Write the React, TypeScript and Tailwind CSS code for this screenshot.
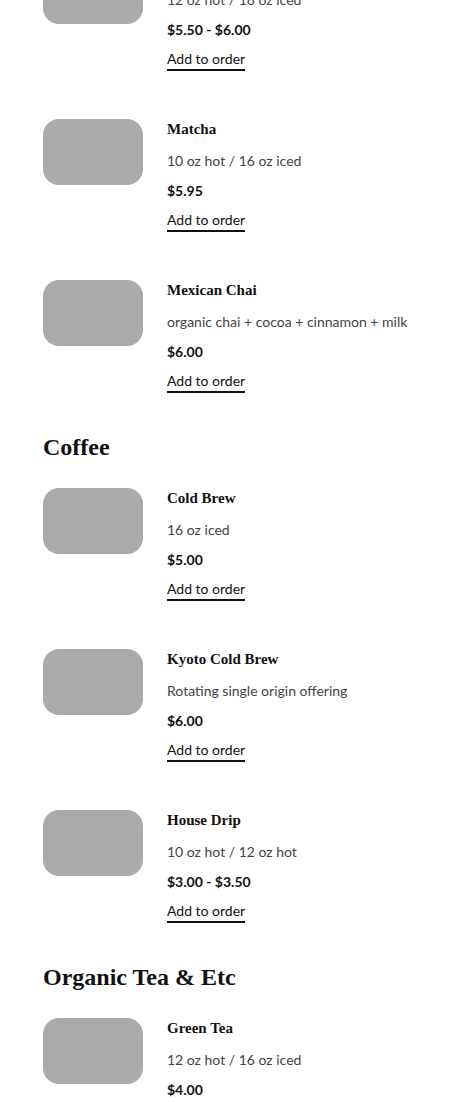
import React from 'react'

type Item = {
  name: string
  desc: string
  price: string
}

const sections: { title?: string; items: Item[] }[] = [
  {
    items: [
      { name: 'Chai Latte', desc: '12 oz hot / 16 oz iced', price: '$5.50 - $6.00' },
      { name: 'Matcha', desc: '10 oz hot / 16 oz iced', price: '$5.95' },
      { name: 'Mexican Chai', desc: 'organic chai + cocoa + cinnamon + milk', price: '$6.00' },
    ],
  },
  {
    title: 'Coffee',
    items: [
      { name: 'Cold Brew', desc: '16 oz iced', price: '$5.00' },
      { name: 'Kyoto Cold Brew', desc: 'Rotating single origin offering', price: '$6.00' },
      { name: 'House Drip', desc: '10 oz hot / 12 oz hot', price: '$3.00 - $3.50' },
    ],
  },
  {
    title: 'Organic Tea & Etc',
    items: [
      { name: 'Green Tea', desc: '12 oz hot / 16 oz iced', price: '$4.00' },
      { name: 'Black Tea', desc: '12 oz hot / 16 oz iced', price: '$4.00' },
    ],
  },
]

function MenuItem({ item }: { item: Item }) {
  return (
    <div className="flex items-start gap-[24px]">
      <div className="w-[100px] h-[66px] shrink-0 rounded-[16px] bg-[#aaaaaa]" />
      <div className="flex flex-col items-start">
        <h3 className="font-['Liberation_Serif',serif] font-bold text-[15px] leading-[20px] text-[#111111]">
          {item.name}
        </h3>
        <p className="mt-[12px] whitespace-nowrap text-[14px] leading-[20px] text-[#444444]">{item.desc}</p>
        <p className="mt-[10px] text-[14px] leading-[20px] font-bold text-[#111111]">{item.price}</p>
        <button className="mt-[9px] text-[14px] leading-[20px] text-[#111111] border-b-2 border-[#111111]">
          Add to order
        </button>
      </div>
    </div>
  )
}

export default function App() {
  return (
    <div className="h-[1102px] overflow-hidden bg-white font-['Lato',sans-serif]">
      <div className="-mt-[42px] px-[43px] flex flex-col">
        {sections.map((section, i) => (
          <section key={i} className={i > 0 ? 'mt-[38px]' : ''}>
            {section.title && (
              <h2 className="mb-[25px] font-['Liberation_Serif',serif] font-bold text-[24px] leading-[32px] text-[#111111]">
                {section.title}
              </h2>
            )}
            <div className="flex flex-col gap-[48px]">
              {section.items.map((item) => (
                <MenuItem key={item.name} item={item} />
              ))}
            </div>
          </section>
        ))}
      </div>
    </div>
  )
}
